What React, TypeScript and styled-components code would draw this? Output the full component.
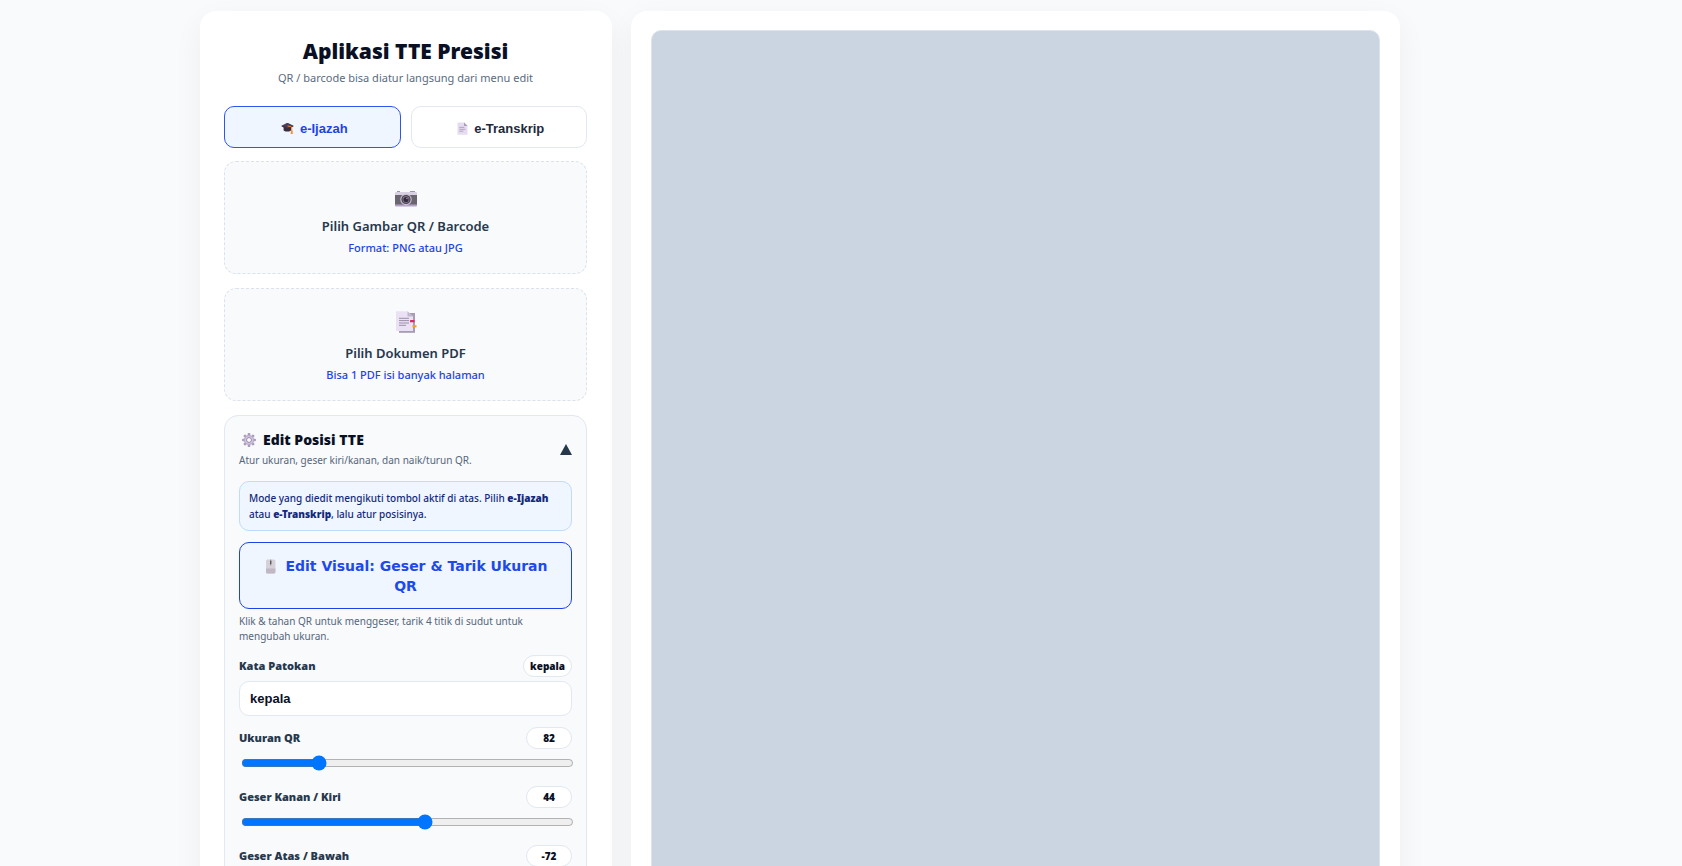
import React, { useState } from "react";
import styled, { createGlobalStyle } from "styled-components";

const sans = `"Segoe UI", "Noto Sans", sans-serif`;
const arial = `Arial, "Liberation Sans", sans-serif`;

const GlobalStyle = createGlobalStyle`
  *, *::before, *::after { box-sizing: border-box; }
  body {
    margin: 0;
    background: #f8fafc;
    color: #0a1024;
    font-family: ${sans};
  }
  h1, h2, p { margin: 0; }
`;

const Page = styled.div`
  padding: 11px 82px 24px 0;
`;

const Layout = styled.div`
  display: grid;
  grid-template-columns: 412px minmax(0, 1fr);
  gap: 19px;
  max-width: 1200px;
  margin: 0 auto;
`;

const Card = styled.section`
  display: flex;
  flex-direction: column;
  background: #ffffff;
  border-radius: 16px;
  box-shadow: 0 10px 30px rgba(0, 0, 0, 0.05);
`;

const ControlCard = styled(Card)`
  padding: 24px 25px 24px 24px;
`;

const PreviewCard = styled(Card)`
  padding: 19px 20px;
`;

const Canvas = styled.div`
  flex: 1;
  background: #cbd5e1;
  border: 1px solid #dde4ed;
  border-radius: 10px;
`;

const Title = styled.h1`
  font-size: 21px;
  font-weight: 900;
  line-height: 32px;
  text-align: center;
`;

const Subtitle = styled.p`
  margin: 2px 0 19px;
  color: #5b6b80;
  font-size: 11px;
  line-height: 18px;
  text-align: center;
`;

const Modes = styled.div`
  display: grid;
  grid-template-columns: 1fr 1fr;
  gap: 10px;
  margin-bottom: 13px;
`;

const ModeButton = styled.button<{ $active: boolean }>`
  display: flex;
  align-items: center;
  justify-content: center;
  gap: 6px;
  height: 42px;
  padding: 2px 0 0 4px;
  border: 1px solid ${(p) => (p.$active ? "#2f55ea" : "#e2e8f0")};
  border-radius: 10px;
  background: ${(p) => (p.$active ? "#eff6ff" : "#ffffff")};
  color: ${(p) => (p.$active ? "#1d43e6" : "#1e293b")};
  font-family: ${arial};
  font-size: 13px;
  font-weight: 700;
  cursor: pointer;
`;

const DropZone = styled.label`
  display: flex;
  flex-direction: column;
  align-items: center;
  height: 113px;
  margin-bottom: 14px;
  padding-top: 16px;
  border: 1px dashed #dbe2ec;
  border-radius: 12px;
  background: #f8fafc;
  cursor: pointer;
`;

const HiddenFile = styled.input`
  position: absolute;
  width: 1px;
  height: 1px;
  opacity: 0;
`;

const DropIcon = styled.span`
  display: flex;
  align-items: center;
  height: 34px;
  margin-bottom: 2px;
`;

const DropTitle = styled.span`
  color: #27384c;
  font-size: 13px;
  font-weight: 600;
  line-height: 24px;
`;

const DropHint = styled.span`
  color: #1d43e6;
  font-size: 11px;
  font-weight: 500;
  line-height: 20px;
`;

const Panel = styled.section`
  padding: 13px 14px 14px;
  border: 1px solid #e2e8f0;
  border-radius: 14px;
  background: #f8fafc;
`;

const PanelHeader = styled.header`
  display: flex;
  align-items: center;
  justify-content: space-between;
  margin-bottom: 12px;
`;

const PanelTitle = styled.h2`
  display: flex;
  align-items: center;
  gap: 7px;
  padding-left: 3px;
  font-size: 14px;
  font-weight: 900;
  line-height: 22px;
`;

const Note = styled.p`
  color: #56667b;
  font-size: 10px;
  line-height: 15px;
`;

const HeaderNote = styled(Note)`
  line-height: 18px;
`;

const Toggle = styled.button`
  padding: 0;
  border: 0;
  background: none;
  line-height: 0;
  cursor: pointer;
`;

const Info = styled.p`
  padding: 8px 9px;
  border: 1px solid #bfdbfe;
  border-radius: 10px;
  background: #eff6ff;
  color: #14297c;
  font-size: 10px;
  font-weight: 500;
  line-height: 16px;

  strong {
    font-weight: 900;
    white-space: nowrap;
  }
`;

const VisualButton = styled.button`
  width: 100%;
  min-height: 67px;
  margin: 11px 0 5px;
  padding: 10px 20px;
  border: 1px solid #1d43e6;
  border-radius: 10px;
  background: #eff6ff;
  color: #1d4aea;
  font-family: "DejaVu Sans", sans-serif;
  font-size: 14px;
  font-weight: 700;
  line-height: 20px;
  cursor: pointer;

  svg {
    margin-right: 7px;
    vertical-align: -3px;
  }
`;

const FieldHead = styled.div`
  display: flex;
  align-items: center;
  justify-content: space-between;
  margin-top: 11px;
`;

const FieldLabel = styled.label`
  color: #27384c;
  font-size: 11px;
  font-weight: 900;
  line-height: 22px;
`;

const Badge = styled.output`
  min-width: 46px;
  height: 22px;
  padding: 0 6px;
  border: 1px solid #e2e8f0;
  border-radius: 11px;
  background: #ffffff;
  font-size: 10px;
  font-weight: 900;
  line-height: 20px;
  text-align: center;
`;

const TextInput = styled.input`
  display: block;
  width: 100%;
  height: 35px;
  margin-top: 4px;
  padding: 0 10px;
  border: 1px solid #e2e8f0;
  border-radius: 10px;
  background: #ffffff;
  color: #0a1024;
  font-family: ${arial};
  font-size: 13px;
  font-weight: 700;
`;

const Range = styled.input`
  display: block;
  width: 100%;
  height: 16px;
  margin: 6px 2px 15px;
`;

function CapIcon() {
  return (
    <svg width="13" height="12" viewBox="0 0 13 12" aria-hidden="true">
      <path d="M2.6 5v3.4q3.6 2.4 7.4 0V5z" fill="#3a2d3f" />
      <path d="M0 4 5.8 1h1.2l6 3-6.2 3.3z" fill="#4b3b56" />
      <path d="M1 4.1 6.7 6.9 12 4.1" fill="none" stroke="#2b2230" strokeWidth=".7" />
      <path d="M6.6 3.9 10.7 5v5" fill="none" stroke="#f28a2e" strokeWidth="1" />
      <path d="M10 8.5h1.5l.3 3.5H9.7z" fill="#fb8c2c" />
    </svg>
  );
}

function PageIcon() {
  return (
    <svg width="11" height="13" viewBox="0 0 11 13" aria-hidden="true">
      <path d="M.5.5H7L10.5 4v8.8H.5z" fill="#e5dcf1" />
      <path d="M7 .3 10.6 4H7z" fill="#aba0b8" />
      <path d="M2.3 5.4h5M2.3 7.3h6M2.3 9.2h4" stroke="#aaa0b6" strokeWidth=".9" />
    </svg>
  );
}

function CameraIcon() {
  return (
    <svg width="22" height="24" viewBox="0 -8 22 24" aria-hidden="true">
      <path d="M2 0h3v1.2H2zM15 0h5v1.2h-5z" fill="#9c94a5" />
      <path d="M0 2q0-1 1-1h20q1 0 1 1v3H0z" fill="#d9d0e4" />
      <path d="M0 4h22v10H0z" fill="#6a6570" />
      <path d="M0 13.6h22v1q0 1-1 1H1q-1 0-1-1z" fill="#b4a3c6" />
      <circle cx="11" cy="8.5" r="5.7" fill="#c9c0d2" />
      <circle cx="11" cy="8.5" r="4.6" fill="#4a4353" />
      <circle cx="11" cy="8.5" r="3.3" fill="#8e8598" />
      <circle cx="11" cy="8.5" r="2.6" fill="#37293f" />
      <circle cx="12" cy="7.5" r=".8" fill="#9b8cb0" />
    </svg>
  );
}

function TabsIcon() {
  return (
    <svg width="22" height="22" viewBox="0 0 22 22" aria-hidden="true">
      <path d="M4 2h16v19.8H4z" fill="#a79cb3" />
      <path d="M1 .3h11.5L18 5.4V20H1z" fill="#eae1f4" />
      <path d="M12.5.3 18 5.6h-5.5z" fill="#c2b7ce" />
      <path d="M4 7.3h10M4 9.6h10M4 12h10M4 14.3h7" stroke="#9a8faa" strokeWidth="1" />
      <rect x="15" y="9" width="4.5" height="2.3" rx=".6" fill="#e0246e" />
      <path d="M17.5 14.2h4v2.2h-4z" fill="#e8a52b" />
    </svg>
  );
}

function GearIcon() {
  return (
    <svg width="14" height="14" viewBox="-7 -7 14 14" aria-hidden="true">
      {[0, 45, 90, 135].map((angle) => (
        <rect key={angle} x="-1.3" y="-6.9" width="2.6" height="13.8" rx=".7" fill="#aa9bbd" transform={`rotate(${angle})`} />
      ))}
      <circle r="5.1" fill="#b9abc9" />
      <circle r="3.8" fill="#d9cfe6" />
      <circle r="2.7" fill="#8b7c9c" />
      <circle r="2" fill="#f8fafc" />
    </svg>
  );
}

function MouseIcon() {
  return (
    <svg width="15" height="15" viewBox="0 0 15 15" aria-hidden="true">
      <rect x="3" y=".5" width="9.4" height="14" rx="1.6" fill="#d5d1d8" />
      <path d="M3 9.5h9.4v3.4q0 1.600-1.600 1.600H4.600Q3 14.500 3 12.900z" fill="#c0b8c5" />
      <path d="M7.700 .5v6" stroke="#9e99a2" strokeWidth="1" />
      <rect x="7" y="1.500" width="1.400" height="4" rx=".7" fill="#5f5b63" />
    </svg>
  );
}

function ArrowIcon({ open }: { open: boolean }) {
  return (
    <svg width="12" height="11" viewBox="0 0 12 11" aria-hidden="true">
      <path d={open ? "M6 0 12 11H0z" : "M6 11 0 0h12z"} fill="#27384c" />
    </svg>
  );
}

type SliderProps = { id: string; label: string; min: number; max: number; initial: number };

function SliderField({ id, label, min, max, initial }: SliderProps) {
  const [value, setValue] = useState(initial);
  return (
    <>
      <FieldHead>
        <FieldLabel htmlFor={id}>{label}</FieldLabel>
        <Badge htmlFor={id}>{value}</Badge>
      </FieldHead>
      <Range id={id} type="range" min={min} max={max} value={value} onChange={(e) => setValue(Number(e.target.value))} />
    </>
  );
}

export default function App() {
  const [mode, setMode] = useState("ijazah");
  const [open, setOpen] = useState(true);
  const [word, setWord] = useState("kepala");

  return (
    <>
      <GlobalStyle />
      <Page>
        <Layout>
          <ControlCard>
            <Title>Aplikasi TTE Presisi</Title>
            <Subtitle>QR / barcode bisa diatur langsung dari menu edit</Subtitle>

            <Modes>
              <ModeButton type="button" $active={mode === "ijazah"} onClick={() => setMode("ijazah")}>
                <CapIcon />
                e-Ijazah
              </ModeButton>
              <ModeButton type="button" $active={mode === "transkrip"} onClick={() => setMode("transkrip")}>
                <PageIcon />
                e-Transkrip
              </ModeButton>
            </Modes>

            <DropZone>
              <HiddenFile type="file" accept="image/png,image/jpeg" />
              <DropIcon><CameraIcon /></DropIcon>
              <DropTitle>Pilih Gambar QR / Barcode</DropTitle>
              <DropHint>Format: PNG atau JPG</DropHint>
            </DropZone>
            <DropZone>
              <HiddenFile type="file" accept="application/pdf" />
              <DropIcon><TabsIcon /></DropIcon>
              <DropTitle>Pilih Dokumen PDF</DropTitle>
              <DropHint>Bisa 1 PDF isi banyak halaman</DropHint>
            </DropZone>

            <Panel>
              <PanelHeader>
                <div>
                  <PanelTitle><GearIcon />Edit Posisi TTE</PanelTitle>
                  <HeaderNote>Atur ukuran, geser kiri/kanan, dan naik/turun QR.</HeaderNote>
                </div>
                <Toggle type="button" aria-label="Edit Posisi TTE" aria-expanded={open} onClick={() => setOpen(!open)}>
                  <ArrowIcon open={open} />
                </Toggle>
              </PanelHeader>

              {open && (
                <>
                  <Info>
                    Mode yang diedit mengikuti tombol aktif di atas. Pilih <strong>e-Ijazah</strong> atau{" "}
                    <strong>e-Transkrip</strong>, lalu atur posisinya.
                  </Info>
                  <VisualButton type="button">
                    <MouseIcon />
                    Edit Visual: Geser &amp; Tarik Ukuran QR
                  </VisualButton>
                  <Note>Klik &amp; tahan QR untuk menggeser, tarik 4 titik di sudut untuk mengubah ukuran.</Note>

                  <FieldHead>
                    <FieldLabel htmlFor="word">Kata Patokan</FieldLabel>
                    <Badge htmlFor="word">{word}</Badge>
                  </FieldHead>
                  <TextInput id="word" type="text" value={word} onChange={(e) => setWord(e.target.value)} />

                  <SliderField id="size" label="Ukuran QR" min={40} max={230} initial={82} />
                  <SliderField id="shift-x" label="Geser Kanan / Kiri" min={-400} max={400} initial={44} />
                  <SliderField id="shift-y" label="Geser Atas / Bawah" min={-400} max={400} initial={-72} />
                </>
              )}
            </Panel>
          </ControlCard>

          <PreviewCard aria-label="Pratinjau">
            <Canvas />
          </PreviewCard>
        </Layout>
      </Page>
    </>
  );
}
